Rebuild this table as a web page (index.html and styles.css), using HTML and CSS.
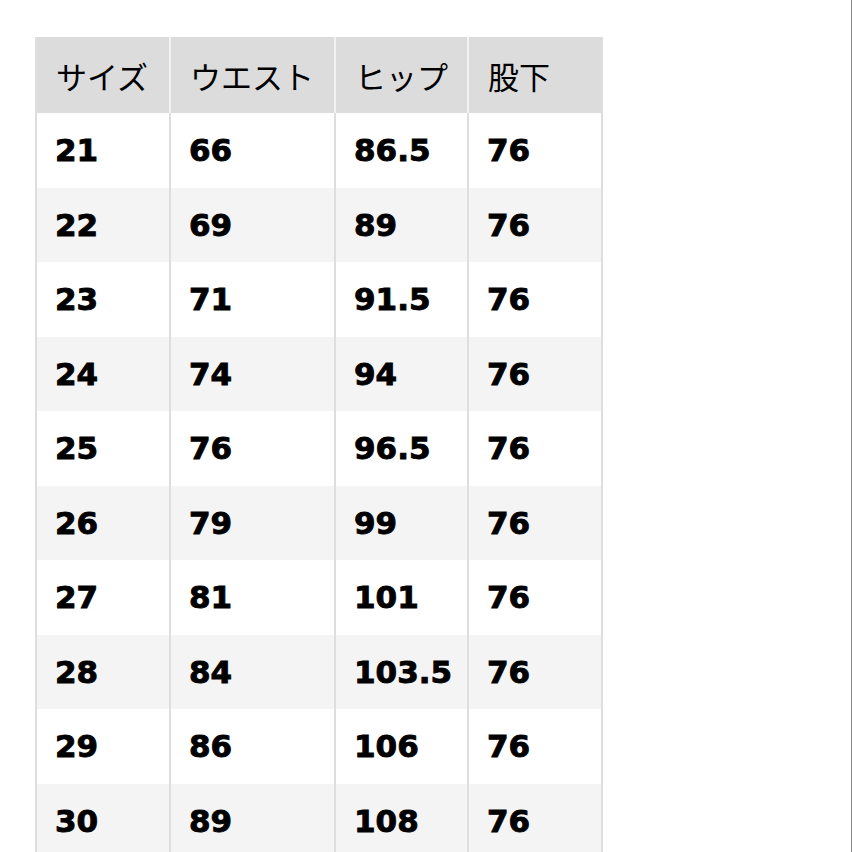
FILE: index.html
```html
<!DOCTYPE html>
<html lang="ja">
<head>
<meta charset="utf-8">
<link rel="stylesheet" href="styles.css">
</head>
<body>
<div class="page">
<table class="size-table">
<thead>
<tr><th>サイズ</th><th>ウエスト</th><th>ヒップ</th><th>股下</th></tr>
</thead>
<tbody>
<tr><td>21</td><td>66</td><td>86.5</td><td>76</td></tr>
<tr><td>22</td><td>69</td><td>89</td><td>76</td></tr>
<tr><td>23</td><td>71</td><td>91.5</td><td>76</td></tr>
<tr><td>24</td><td>74</td><td>94</td><td>76</td></tr>
<tr><td>25</td><td>76</td><td>96.5</td><td>76</td></tr>
<tr><td>26</td><td>79</td><td>99</td><td>76</td></tr>
<tr><td>27</td><td>81</td><td>101</td><td>76</td></tr>
<tr><td>28</td><td>84</td><td>103.5</td><td>76</td></tr>
<tr><td>29</td><td>86</td><td>106</td><td>76</td></tr>
<tr><td>30</td><td>89</td><td>108</td><td>76</td></tr>
</tbody>
</table>
</div>
</body>
</html>
```
FILE: styles.css
```css
html, body {
  margin: 0;
  padding: 0;
  background: #ffffff;
  height: 100%;
  overflow: hidden;
}
.page {
  height: 100%;
  box-sizing: border-box;
  padding: 37px 0 0 35px;
  border-right: 1px solid #8a8a8a;
}
.size-table {
  border-collapse: collapse;
  table-layout: fixed;
  width: 566px;
  border-left: 2px solid #dedede;
  border-right: 2px solid #dedede;
}
.size-table th:nth-child(1) { width: 134px; }
.size-table th:nth-child(2) { width: 165px; }
.size-table th:nth-child(3) { width: 133px; }
.size-table th:nth-child(4) { width: 134px; }
.size-table th {
  background: #dcdcdc;
  height: 76px;
  padding: 0 0 0 19px;
  text-align: left;
  font-family: "Noto Sans CJK JP", "Noto Sans", sans-serif;
  font-weight: 400;
  font-size: 31px;
  color: #000;
  border-left: 2px solid #f2f2f2;
  box-sizing: border-box;
}
.size-table th:first-child { border-left: none; }
.size-table td {
  height: 74.5px;
  padding: 0 0 0 18px;
  font-family: "DejaVu Sans", sans-serif;
  font-weight: 700;
  font-size: 31px;
  color: #000;
  -webkit-text-stroke: 0.9px #000;
  border-left: 2px solid #dedede;
  box-sizing: border-box;
}
.size-table td:first-child { border-left: none; }
.size-table tbody tr:nth-child(even) td { background: #f4f4f4; }
.size-table tbody tr:nth-child(odd) td { background: #ffffff; }
```
